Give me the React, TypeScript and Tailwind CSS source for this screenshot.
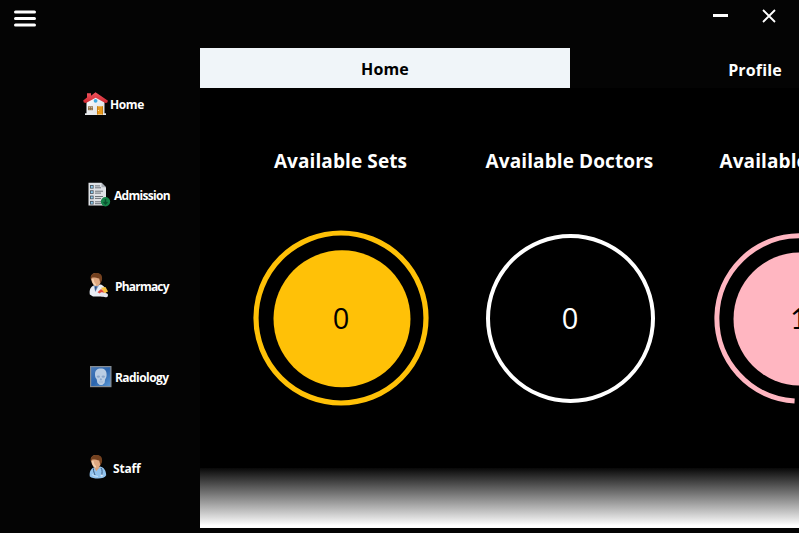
import type { ReactNode } from "react";

function HomeIcon() {
  return (
    <svg width="26" height="24" viewBox="0 0 26 24" className="block">
      <defs>
        <linearGradient id="wall" x1="0" y1="0" x2="1" y2="1">
          <stop offset="0" stopColor="#ffffff" />
          <stop offset="1" stopColor="#d9dde2" />
        </linearGradient>
        <linearGradient id="roof" x1="0" y1="0" x2="0" y2="1">
          <stop offset="0" stopColor="#f0555f" />
          <stop offset="1" stopColor="#cf2730" />
        </linearGradient>
      </defs>
      <path d="M3.500 9.500 12.500 3l9 6.500V22h-18Z" fill="url(#wall)" />
      <rect x="2" y="21.300" width="21" height="1.700" fill="#e9ebee" />
      <path d="M4 1.200h4V3.700L12.500.3 25 8.800l-.9 1.900-1.800.3L12.700 5.800 3 11 .8 10.400.2 8.500 4 5.600Z" fill="url(#roof)" />
      <circle cx="12.600" cy="8.800" r="1.900" fill="#3fa9e0" />
      <rect x="5" y="14.300" width="5" height="3.900" fill="#8d6a43" />
      <path d="M5.700 15h1.500v1H5.700zM8 15h1.400v1H8zM5.700 16.700h1.500v.9H5.700zM8 16.700h1.400v.9H8z" fill="#c9b48f" />
      <rect x="14" y="14.300" width="6" height="8.200" fill="#e99a1c" />
      <path d="M14 14.300h.7v8.200H14zM19.300 14.300h.7v8.200h-.7z" fill="#b8730e" />
      <circle cx="15.500" cy="18.500" r=".6" fill="#fff1c4" />
    </svg>
  );
}

function AdmissionIcon() {
  return (
    <svg width="24" height="26" viewBox="0 0 24 26" className="block">
      <path d="M1.500.8h13l4.500 4.400v18.300h-17.500Z" fill="#dfe2e6" />
      <path d="M14.500.8 19 5.200h-4.500Z" fill="#a9afb6" />
      {[3, 8.3, 13.6, 18.9].map((y) => (
        <g key={y}>
          <rect x="3" y={y} width="3.600" height="3.600" fill="#4a5560" />
          <rect x="3.900" y={y + 0.9} width="1.900" height="1.900" fill="#8ccdf2" />
          <path d={`M8 ${y + 0.9}h${y === 3 ? 5 : 8}M8 ${y + 2.8}h6`} stroke="#6b7178" strokeWidth="1" />
        </g>
      ))}
      <circle cx="18.500" cy="19.800" r="4.700" fill="#168549" />
      <path d="M18.500 17.100v4.500M16.600 19.900l1.900 2 1.900-2" fill="none" stroke="#0b5130" strokeWidth="1.400" />
    </svg>
  );
}

function Head() {
  return (
    <g>
      <path d="M2 5.500c0-4 2-5.300 5-5.300 3.800 0 5.500 2.300 5.300 5.500-.1 3.800-1.900 7.300-4.800 7.300S2.500 9.300 2 5.500Z" fill="#dfa982" />
      <path d="M1.700 6.500C1 2 3.500 0 7.500 0c4.300 0 6.200 2.600 5.500 7l-1.500 3.800-1.300-5.300C8 5 5 4.200 3 4.700Z" fill="#74411f" />
      <path d="M3.600 6c.6 3.600 1.600 5.500 3.300 6.200" fill="none" stroke="#f5d0ae" strokeWidth="1.800" />
    </g>
  );
}

function PharmacyIcon() {
  return (
    <svg width="22" height="25" viewBox="0 0 22 25" className="block">
      <path d="M.8 21.500c-.8-4.500.8-7.800 4-9.100l6.500-.8c3.500.7 5.500 3.500 5.800 7.500l-3.500 4.500H4Z" fill="#e9edf4" />
      <path d="m4.500 12.500 1.800 6.500 4-7.200Z" fill="#7e9cc6" />
      <path d="m6 13.500.6 5 1.200-5Z" fill="#223f70" />
      <Head />
      <path d="m8.500 19.300 3.500-3.300 4.500 3.500-3.300 2.300Z" fill="#e2453c" />
      <path d="m12 14.800 4.500-.8 2.500 4.500-3.500 1.700Z" fill="#f6bf3d" />
      <rect x="10.500" y="19.800" width="8.500" height="4" rx="2" fill="#e4e5ee" transform="rotate(14 15 22)" />
    </svg>
  );
}

function RadiologyIcon() {
  return (
    <svg width="22" height="22" viewBox="0 0 22 22" className="block">
      <defs>
        <linearGradient id="film" x1="0" y1="0" x2="1" y2="1">
          <stop offset="0" stopColor="#4b7cba" />
          <stop offset=".5" stopColor="#2b65ae" />
          <stop offset="1" stopColor="#5e9bd8" />
        </linearGradient>
      </defs>
      <rect x=".6" y=".6" width="20.300" height="20" fill="url(#film)" stroke="#868d94" strokeWidth="1.200" />
      <path d="M5 8.500C5 4.500 7.200 2.600 10.800 2.600s5.800 1.900 5.800 5.900c0 2-.3 3.400-1.400 4.600l-.6 4-2.300 1.800H9.800l-2.400-1.800-.8-4C5.500 12 5 10.500 5 8.500Z" fill="#b9cde4" />
      <ellipse cx="8.400" cy="10.600" rx="1.600" ry="1.200" fill="#89a6cb" />
      <ellipse cx="13.300" cy="10.600" rx="1.600" ry="1.200" fill="#89a6cb" />
      <path d="m10.900 12.300-.8 1.700h1.600ZM9 16h4" fill="#7f9cc4" stroke="#89a6cb" strokeWidth=".6" />
    </svg>
  );
}

function StaffIcon() {
  return (
    <svg width="22" height="25" viewBox="0 0 22 25" className="block">
      <path d="M.8 21.500c-.7-4.500 1-7.800 4-9.100l6.500-.8c3.500.8 5.900 4 5.900 8.700-1.200 2.500-4 3.200-8.200 3.200-3.600 0-6.500-.4-8.200-2Z" fill="#92c3ee" />
      <path d="m5 12.300 2.300 4 3.700-4.300Z" fill="#d9a27a" />
      <Head />
      <path d="M4.500 13.500c-.3 3 1 4.500 1.500 6.500M12 13c1.700 2 1 4.500.8 7" fill="none" stroke="#38587e" strokeWidth="1" />
      <circle cx="12.700" cy="20.500" r="1.100" fill="#d9e8f7" />
      <path d="M3 19.500c2 1.400 3.800 2 6 2" fill="none" stroke="#c2dff7" strokeWidth="1.200" />
    </svg>
  );
}

function NavItem({ indent, label, text, children }: { indent: string; label: string; text: string; children: ReactNode }) {
  return (
    <a className={`flex h-[91px] items-center ${indent}`}>
      {children}
      <span className={`mt-[2px] text-[12px] leading-4 font-bold whitespace-nowrap ${label}`}>{text}</span>
    </a>
  );
}

function Stat({ title, children }: { title: string; children: ReactNode }) {
  return (
    <section className="flex w-[229px] shrink-0 flex-col items-center">
      <h2 className="h-7 text-[19px] leading-7 font-bold tracking-[0.1px] whitespace-nowrap">{title}</h2>
      <div className="mt-[53px]">{children}</div>
    </section>
  );
}

export default function App() {
  return (
    <div className="flex h-[533px] w-[799px] overflow-hidden bg-[#040404] font-['Open_Sans','Noto_Sans',sans-serif] text-white">
      <aside className="flex w-[200px] shrink-0 flex-col">
        <button className="mt-[9px] ml-[13px] h-5 w-6">
          <svg width="24" height="20" viewBox="0 0 24 20" className="block">
            <path d="M2.500 3h19M2.500 9.500h19M2.500 16h19" stroke="#fff" strokeWidth="3" strokeLinecap="round" />
          </svg>
        </button>
        <nav className="mt-[29px] flex flex-col">
          <NavItem indent="pl-[83px]" label="ml-[1px] tracking-[-0.4px]" text="Home"><HomeIcon /></NavItem>
          <NavItem indent="pl-[87px]" label="ml-[3px] tracking-[-0.7px]" text="Admission"><AdmissionIcon /></NavItem>
          <NavItem indent="pl-[89px]" label="ml-[4px] tracking-[-0.8px]" text="Pharmacy"><PharmacyIcon /></NavItem>
          <NavItem indent="pl-[90px]" label="ml-[3px] tracking-[-0.55px]" text="Radiology"><RadiologyIcon /></NavItem>
          <NavItem indent="pl-[89px]" label="ml-[2px] tracking-[-0.15px]" text="Staff"><StaffIcon /></NavItem>
        </nav>
      </aside>

      <main className="flex w-[599px] flex-col overflow-hidden">
        <header className="flex h-12 shrink-0 justify-end">
          <svg width="100" height="32" viewBox="699 0 100 32" className="block">
            <path d="M713 15.500h15" stroke="#fff" strokeWidth="3" />
            <path d="m763 10 12 12M775 10l-12 12" stroke="#fff" strokeWidth="1.800" />
          </svg>
        </header>
        <div className="flex h-10 w-[740px] shrink-0 text-[16px] font-bold tracking-[0.15px]">
          <button className="flex h-10 w-[370px] items-center justify-center bg-[#f0f5f9] pt-[2px] text-black">Home</button>
          <button className="flex h-10 w-[370px] items-center justify-center pt-[4px]">Profile</button>
        </div>
        <div className="flex h-[380px] w-[740px] shrink-0 bg-black pt-[59px] pl-[26px]">
          <Stat title="Available Sets">
            <svg width="180" height="180" viewBox="251 228 180 180" className="block">
              <circle cx="341" cy="318" r="85" fill="none" stroke="#ffc107" strokeWidth="5.200" />
              <circle cx="342" cy="318.800" r="68.500" fill="#ffc107" />
              <text x="341" y="328.500" textAnchor="middle" fill="#000" className="text-[29px]">0</text>
            </svg>
          </Stat>
          <Stat title="Available Doctors">
            <svg width="180" height="180" viewBox="480 228 180 180" className="block">
              <circle cx="570.500" cy="318.500" r="82.500" fill="none" stroke="#fff" strokeWidth="4" />
              <text x="570" y="328.500" textAnchor="middle" fill="#fff" className="text-[29px]">0</text>
            </svg>
          </Stat>
          <Stat title="Available Rooms">
            <svg width="180" height="180" viewBox="709 228 180 180" className="block">
              <path d="M794.600 401.050A82.700 82.700 0 0 1 799.500 235.800A82.700 82.700 0 0 1 882.200 318.500" fill="none" stroke="#ffb6c1" strokeWidth="5" />
              <circle cx="800" cy="319" r="66.500" fill="#ffb6c1" />
              <text x="790.300" y="329" fill="#000" className="font-['Lato','Open_Sans',sans-serif] text-[29px]">10</text>
            </svg>
          </Stat>
        </div>
        <div className="h-[60px] shrink-0 bg-[linear-gradient(#080808,#fff_96%)]" />
      </main>
    </div>
  );
}
